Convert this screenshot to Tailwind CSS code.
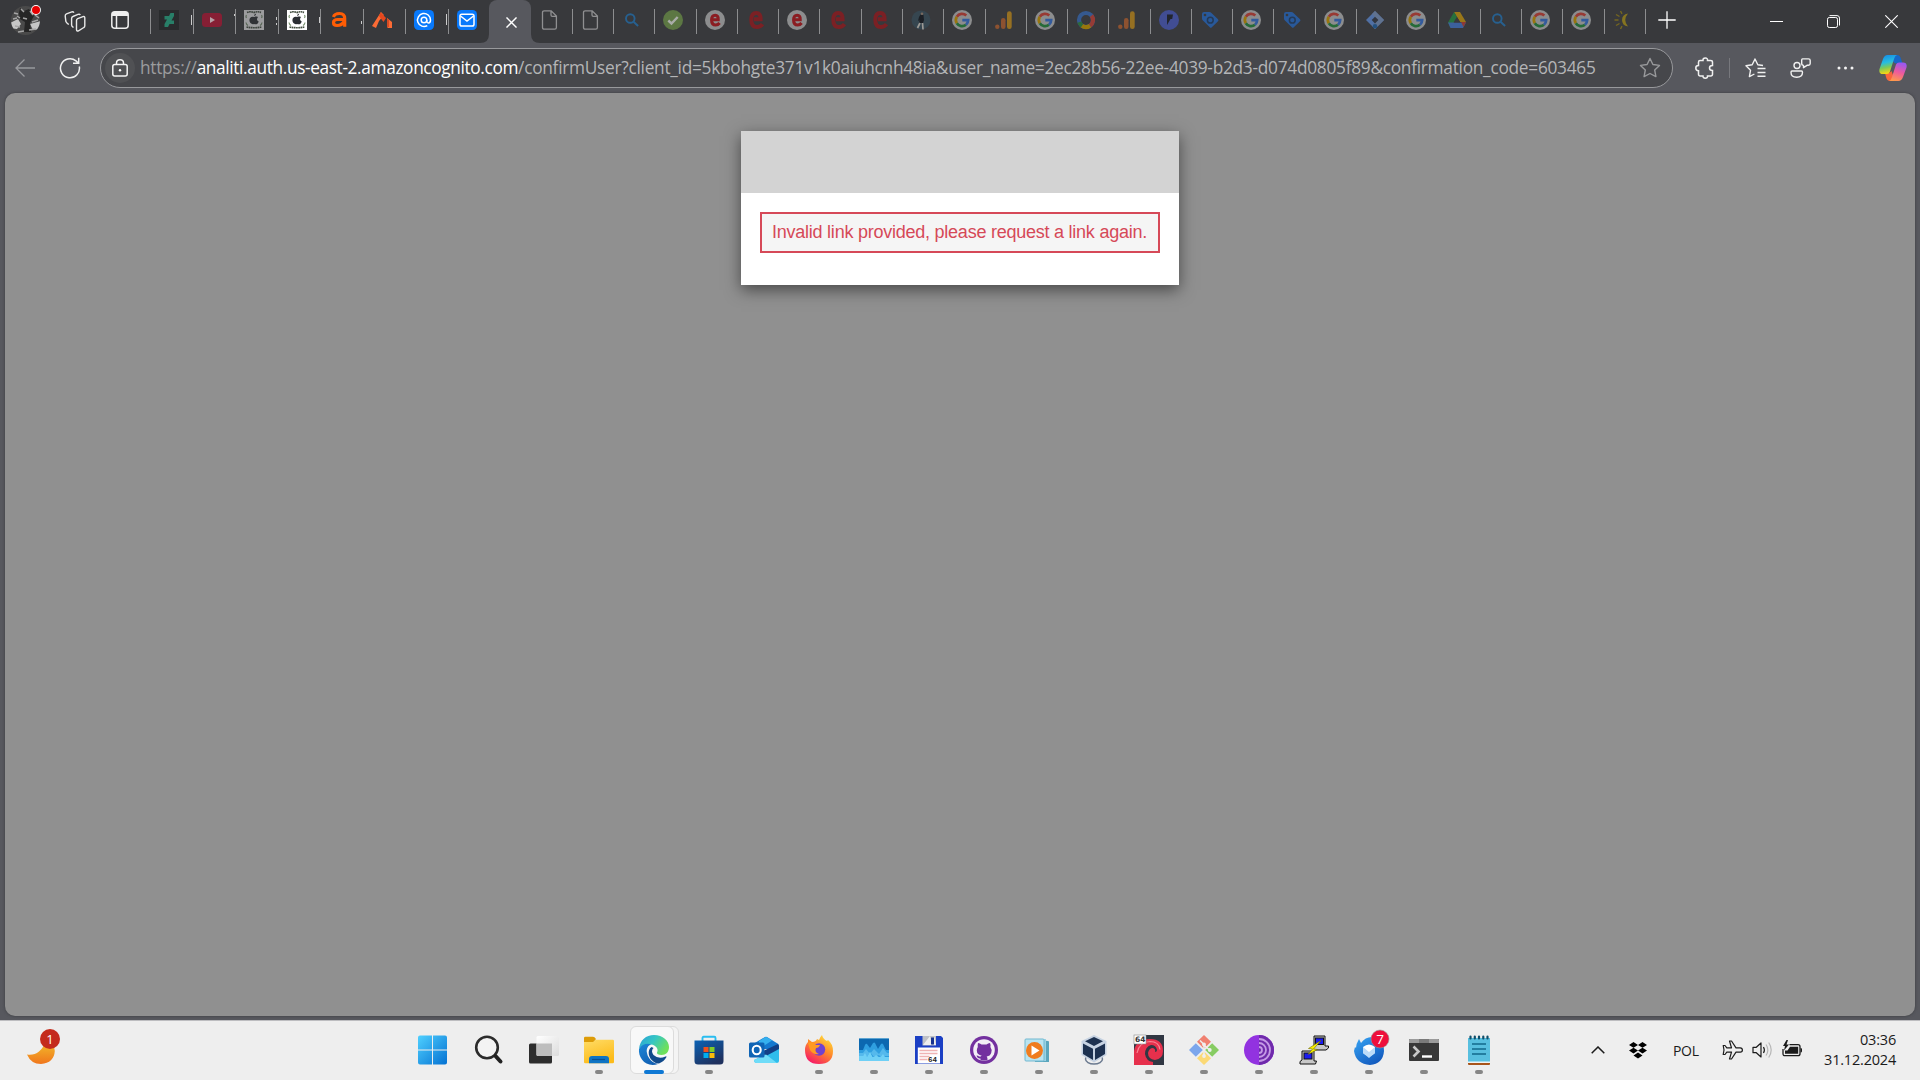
<!DOCTYPE html>
<html lang="en">
<head>
<meta charset="utf-8">
<title>Confirm user</title>
<script src="https://cdn.jsdelivr.net/npm/@tailwindcss/browser@4"></script>
</head>
<body class="w-[1920px] h-[1080px] overflow-hidden flex flex-col bg-[#57585e] font-['Open_Sans',sans-serif]">

<!-- shared defs -->
<svg class="hidden">
  <defs>
    <symbol id="doc" viewBox="0 0 20 20"><path d="M4 .8h7l5.200 5.200v11.500q0 1.700-1.700 1.700H4q-1.700 0-1.700-1.700V2.500Q2.300.8 4 .8ZM10.800.8V5q0 1.300 1.300 1.300h4.200" transform="translate(.2)" fill="none" stroke="#8f8f91" stroke-width="1.300"/></symbol>
    <symbol id="find" viewBox="0 0 20 20"><circle cx="8.300" cy="8.500" r="4.300" fill="none" stroke="#27608f" stroke-width="1.900"/><path d="M11.500 11.700l4.600 4.300" stroke="#27608f" stroke-width="2"/></symbol>
    <symbol id="check" viewBox="0 0 20 20"><circle cx="10" cy="10" r="10" fill="#5c7743"/><path d="M5.300 10.500l3.200 3 6.200-6.500" fill="none" stroke="#a9aca8" stroke-width="2.400"/></symbol>
    <symbol id="eplain" viewBox="0 0 20 20"><path d="M16.500 14.200Q14.500 17 11 17 5.300 17 5.300 9.800 5.300 3 10.300 3q4.500 0 4.300 6.300H8" fill="none" stroke="#7b2024" stroke-width="4"/></symbol>
    <symbol id="ering" viewBox="0 0 20 20"><circle cx="10" cy="10" r="10" fill="#8c8d8e"/><path d="M14.600 13Q13 15 10.700 15 6.600 15 6.600 10 6.600 5.200 10.200 5.200q3.200 0 3 4.500H8" fill="none" stroke="#8b1d22" stroke-width="3.100"/></symbol>
    <symbol id="person" viewBox="0 0 20 20"><circle cx="10" cy="10" r="9.500" fill="#364650"/><path d="M9.500 4.500l3 .5.500 5-1 3h-4l.5-3-1.500 1 1-4Z" fill="#1c2026"/><circle cx="11" cy="3.800" r="1.300" fill="#77695f"/><path d="M9 13l-2.500 5M11.500 13l.5 6.500" stroke="#9b9995" stroke-width="1.700" fill="none"/></symbol>
    <symbol id="g" viewBox="0 0 20 20"><circle cx="10" cy="10" r="10" fill="#8c8d8e"/><g fill="none" stroke-width="2.700"><path d="M4.800 6.700A6.200 6.200 0 0 1 14.300 5.500" stroke="#983a34"/><path d="M4.800 6.700a6.200 6.200 0 0 0 0 6.600" stroke="#98750e"/><path d="M4.800 13.300a6.200 6.200 0 0 0 9.200 1.500" stroke="#266b38"/><path d="M14 14.800a6.200 6.200 0 0 0 2.200-4.700H10.300" stroke="#335b9d"/></g></symbol>
    <symbol id="ga" viewBox="0 0 20 20"><circle cx="3.300" cy="16.700" r="2.200" fill="#8d5230"/><rect x="7" y="8" width="4.500" height="11" rx="2.200" fill="#8d5230"/><rect x="13" y="1.200" width="4.700" height="17.800" rx="2.300" fill="#967022"/></symbol>
    <symbol id="donut" viewBox="0 0 20 20"><g fill="none" stroke-width="4.200"><circle cx="10" cy="10" r="7" stroke="#35598f"/><path d="M15.500 5.600A7 7 0 0 1 14 15.700" stroke="#963b35"/><path d="M14 15.700a7 7 0 0 1-8.500-.3" stroke="#98770c"/><path d="M6 15.700a7 7 0 0 1-2.600-3.500" stroke="#2c6b3a"/></g></symbol>
    <symbol id="purple" viewBox="0 0 20 20"><circle cx="10" cy="10" r="10" fill="#414d93"/><path d="M8 4.500h6l-.8 4.500h-1.700L8 15Z" fill="#22252d"/></symbol>
    <symbol id="tag" viewBox="0 0 20 20"><path d="M2 4Q2 2 4 2h5.500q1 0 1.700.7L18 9.300q1 1 0 2L11.800 17.300q-1 1-2 0L2.700 10.300Q2 9.600 2 8.600Z" fill="#29599a"/><circle cx="5" cy="5" r="1.300" fill="#38393c"/><circle cx="10.300" cy="10.200" r="2.900" fill="none" stroke="#243a57" stroke-width="1.500"/></symbol>
    <symbol id="gtm" viewBox="0 0 20 20"><path d="M10 1l9 9-9 9-9-9Z" fill="#5070a4"/><path d="M10 1l9 9-9 9-3-3 6-6-6-6Z" fill="#60728f"/><path d="M10 6.700l3.400 3.300-3.400 3.400L6.700 10Z" fill="#32363f"/><circle cx="10" cy="16.300" r="2.300" fill="#24517f"/></symbol>
    <symbol id="drive" viewBox="0 0 20 20"><path d="M7 2h6l6 10h-6Z" fill="#997719"/><path d="M7 2l3 5-6.500 11L1 12.500Z" fill="#27703d"/><path d="M4 12.500h15L16 18H3.500L1 12.500Z" fill="#3c609c"/><path d="M10 7l3.500 5.500H6.700Z" fill="#38393c"/><path d="M14 12h5l-2.500 5Z" fill="#8f3935"/></symbol>
    <symbol id="sun" viewBox="0 0 20 20"><path d="M15 3.500q-5.500 6.500 0 13Q9 15.500 9 10t6-6.500Z" fill="#857420"/><path d="M5.500 10H1.500M6.500 6.500L3 4.500M6.500 13.500L3 15.500M9 3.800L7.500 1M9 16.200L7.500 19" fill="none" stroke="#76671f" stroke-width="1.400"/></symbol>
    <symbol id="da" viewBox="0 0 20 20"><rect width="20" height="20" fill="#292b2d"/><path d="M11.500 3H15v3l-2.500 4.500H15V14h-4.500L9 17H5.500v-3L8 9.500H5.500V6H10Z" fill="#287f68"/></symbol>
    <symbol id="yt" viewBox="0 0 20 20"><rect y="3" width="20" height="14" rx="3.500" fill="#861f34"/><path d="M8 7v6l5-3Z" fill="#b4a0a5"/></symbol>
    <symbol id="apple" viewBox="0 0 20 20"><rect width="20" height="20" fill="#fff"/><path d="M3 2.500q3.500-1.500 7 0 3.500-1.500 7 0M2.500 17q7.500 1.500 15 0" stroke="#3f4a3c" stroke-width="1.700" stroke-dasharray="1.700 .5" fill="none"/><path d="M2.500 5q-1 1.500 0 3M17.500 5q1 1.500 0 3M2 12.500q.3 2 2 3M18 12.500q-.3 2-2 3" stroke="#7d9674" stroke-width="1.200" fill="none"/><path d="M10 7c2.500-1.200 4 0 4 0-1.400 1.700-1.400 3.500.7 4.500-.8 2.700-2.700 3.400-4.700 2.400-2 1-4.600-.7-4.600-3.600C5.400 7.500 7.700 6 10 7ZM10 6q0-2 2.200-2.500Q12.200 5.500 10 6Z" fill="#2a2d32"/></symbol>
    <symbol id="appledim" viewBox="0 0 20 20"><use href="#apple" opacity=".5"/></symbol>
    <symbol id="a" viewBox="0 0 20 20"><path d="M4.500 7q1-3.500 6-3.500 5.200 0 5.200 5v8.300" fill="none" stroke="#ff5d05" stroke-width="3.200"/><path d="M15 9.500H9q-4.500 0-4.500 3t3.500 3q5 0 7-4" fill="none" stroke="#ff5d05" stroke-width="3.200"/></symbol>
    <symbol id="orange" viewBox="0 0 20 20"><path d="M0 16L9 2l3 3-5 6-3 7Z" fill="#fc6b35"/><path d="M8.500 2.200L14 8l-2.500 4L7 6Z" fill="#e5481e"/><path d="M15 8l5 4v6h-4.500Z" fill="#fc6b35"/><path d="M15 8l2 2v7h-2Z" fill="#d84a22"/></symbol>
    <symbol id="at" viewBox="0 0 20 20"><rect width="20" height="20" rx="4.500" fill="#0879fb"/><g fill="none" stroke="#fff" stroke-width="1.500"><circle cx="10" cy="10" r="2.800"/><path d="M12.800 10v1.500q.2 1.600 1.700 1.500 2-.2 2-3A6.500 6.500 0 1 0 13.300 15.600"/></g></symbol>
    <symbol id="mail" viewBox="0 0 20 20"><rect width="20" height="20" rx="4.500" fill="#0879fb"/><rect x="3" y="4.200" width="14" height="11.800" rx="1.800" fill="none" stroke="#fff" stroke-width="1.500"/><path d="M3.500 6l6.500 5 6.500-5" fill="none" stroke="#fff" stroke-width="1.500"/></symbol>
  </defs>
</svg>

<!-- tab strip -->
<header class="h-[43px] shrink-0 bg-[#38393c] flex text-white">
  <div class="w-[150px] shrink-0 flex items-center">
    <svg class="w-8 h-8 ml-[10px] -mt-[5px] shrink-0" viewBox="0 0 32 32">
      <clipPath id="av"><circle cx="15.500" cy="17.500" r="14.500"/></clipPath>
      <g clip-path="url(#av)"><rect width="32" height="32" y="2" fill="#4a4a4a"/><path d="M0 20l8-4 3 5-4 5-7-1ZM20 21l11-3v8l-8 1Z" fill="#c6c6c6"/><path d="M10 5l4 3 5-2 5 7-4 7 1 9h-7l1-10-5-3-1-6Z" fill="#252525"/><path d="M4 10l4 1M11 6l3 3M7 13l3 2M20 8l3 4M25 12l4 3M13 15l4 1M22 19l6-2M5 23l5 1M19 27l7-1M3 16l4-1M8 29l6-1" stroke="#a5a5a5" stroke-width="1.500"/></g>
      <circle cx="26" cy="7" r="4.900" fill="#fff"/><circle cx="26" cy="7" r="4" fill="#e60000"/>
    </svg>
    <svg class="w-[22px] h-[22px] ml-[22px] shrink-0" viewBox="0 0 22 22" fill="none" stroke="#e8e8e8" stroke-width="1.400"><path d="M12.500 9.500q0-1.300 1.200-1.800L19 5.600q1.700-.5 1.800 1.200v8q0 1.200-1 1.700l-5.300 3.300q-2 .8-2-1.200Z"/><path d="M9.500 16.500l-.5-.4q-1.400-.7-1.400-2V7.500q0-1.500 1.300-2L14 3.400q1.600-.6 2.300.6"/><path d="M4.800 13.500l-.5-.3Q2.500 12 1.900 10.500L1.200 5q0-1.700 1.300-2.200L7.800.9q1.300-.4 2.200.8"/></svg>
    <svg class="w-[18px] h-[18px] ml-[25px] -mt-[3px] shrink-0" viewBox="0 0 18 18" fill="none" stroke="#eee" stroke-width="1.500"><rect x=".8" y=".8" width="16.400" height="16.400" rx="3"/><path d="M1 3h16" stroke-width="4"/><path d="M5.500 4v13"/></svg>
  </div>
  <div id="pinned" class="flex shrink-0 w-[340px]"></div>
  <div class="-ml-[1.500px] w-[42.100px] shrink-0 relative bg-[#57585e] rounded-t-lg flex items-center justify-center">
    <svg class="w-[11px] h-[11px] mt-0 -mb-px ml-[3px]" viewBox="0 0 10 10"><path d="M.4.400l9.200 9.200M9.600.4L.4 9.600" stroke="#fff" stroke-width="1.300"/></svg>
    <svg class="absolute -left-[9px] bottom-0 w-[9px] h-[9px]" viewBox="0 0 9 9"><path d="M9 0v9H0q9 0 9-9Z" fill="#57585e"/></svg>
    <svg class="absolute -right-[9px] bottom-0 w-[9px] h-[9px]" viewBox="0 0 9 9"><path d="M0 0v9h9Q0 9 0 0Z" fill="#57585e"/></svg>
  </div>
  <div id="tabs" class="flex shrink-0 w-[1114px]"></div>
  <div class="flex-1 flex items-center border-l border-transparent">
    <svg class="w-[18px] h-[18px] ml-[12px] -mt-[4px]" viewBox="0 0 18 18"><path d="M9 .3v17.400M.3 9h17.400" stroke="#fff" stroke-width="1.300"/></svg>
    <svg class="w-[13px] h-[13px] ml-[94px] " viewBox="0 0 13 13"><path d="M0 6.500h13" stroke="#fff" stroke-width="1"/></svg>
    <svg class="w-[13px] h-[13px] ml-[44px] " viewBox="0 0 13 13" fill="none" stroke="#fff"><rect x=".5" y="2.500" width="10" height="10" rx="1.800"/><path d="M2.500 .6H10q2.500 0 2.500 2.500V10.500"/></svg>
    <svg class="w-[13px] h-[13px] ml-[45px] " viewBox="0 0 13 13"><path d="M.3.300l12.400 12.400M12.700.3L.3 12.700" stroke="#fff" stroke-width="1.100"/></svg>
  </div>
</header>

<!-- toolbar -->
<nav class="h-[50px] shrink-0 flex items-center pb-0">
  <svg class="w-5 h-[18px] ml-[15px]" viewBox="0 0 20 18" fill="none" stroke="#98999d" stroke-width="1.300"><path d="M20 9H1M9.500.5L1 9l8.500 8.500"/></svg>
  <svg class="w-[22px] h-[22px] ml-[24px]" viewBox="0 0 22 22" fill="none" stroke="#f0f0f0" stroke-width="1.500"><path d="M20.300 9.500A9.500 9.500 0 1 1 17 3.900L19.300 6M19.700.8V6.300H14"/></svg>
  <div class="ml-[19px] mt-0 w-[1573px] h-10 rounded-full border border-[#98999c] bg-[#46474b] flex items-center">
    <div class="w-[30px] h-[30px] ml-[4px] rounded-full bg-[#505154] flex items-center justify-center shrink-0">
      <svg class="w-4 h-[18px] -mt-px" viewBox="0 0 16 18" fill="none" stroke="#f4f4f4" stroke-width="1.500"><rect x=".8" y="5.500" width="14.400" height="11.500" rx="2"/><path d="M4.500 5.500V4q0-3.200 3.500-3.200T11.500 4v1.500"/><circle cx="8" cy="11.200" r="1.200" fill="#fff" stroke="none"/></svg>
    </div>
    <div class="ml-[5px] w-[1459px] whitespace-nowrap text-[17.300px] leading-[24px] text-[#b4b5b7] -mt-px"><span class="text-[#9b9c9e] tracking-[-0.290px]">https://</span><span class="text-white tracking-[-0.370px]">analiti.auth.us-east-2.amazoncognito.com</span><span class="tracking-[-0.270px]">/confirmUser?client_id=5kbohgte371v1k0aiuhcnh48ia&amp;user_name=2ec28b56-22ee-4039-b2d3-d074d0805f89&amp;confirmation_code=603465</span></div>
    <svg class="w-[22px] h-[22px] ml-[40px] shrink-0" viewBox="0 0 22 22" fill="none" stroke="#98999b" stroke-width="1.400"><path d="M11 1.500l2.900 6 6.600.9-4.800 4.600 1.200 6.600L11 16.500l-5.900 3.100 1.200-6.600L1.500 8.400l6.600-.9Z" stroke-linejoin="round"/></svg>
  </div>
  <svg class="w-5 h-[22px] ml-[22px]" viewBox="0 0 20 22" fill="none" stroke="#f0f0f0" stroke-width="1.500"><path d="M5 3.500H8q-.2-2.500 2.300-2.500t2.200 2.500h3.200q1.800 0 1.800 1.700V8.500q-3 0-3 2.500t3 2.500v3.800q0 1.700-1.800 1.700h-3.200q.2 2.200-2.200 2.200T8 19H5.200q-1.700 0-1.700-1.700v-3.600Q.8 13.500.8 11t2.700-2.500V5.200Q3.500 3.500 5 3.500Z"/></svg>
  <div class="w-px h-5 bg-[#77787d] ml-[14px]"></div>
  <svg class="w-[21px] h-5 ml-[15px]" viewBox="0 0 21 20" fill="none" stroke="#f0f0f0" stroke-width="1.400" stroke-linejoin="round"><path d="M18 7.500l-5.200-.7L10 1 7.200 6.800 1 7.800l4.500 4.500L4.400 18.600l5-2.600M12.500 10.500H20.500M12.500 14.500H20.500M12.500 18.300H20.500"/></svg>
  <svg class="w-[21px] h-5 ml-[24px]" viewBox="0 0 21 20" fill="none" stroke="#f0f0f0" stroke-width="1.400"><circle cx="7" cy="7.500" r="3"/><path d="M2 13h9.500q1 0 1 1.200 0 5-5.800 5T1 14.200Q1 13 2 13ZM12.500.9h6q1.700 0 1.700 1.700v3q0 1.700-1.700 1.700H17L13.500 9.700V7.400q-1.800 0-1.800-1.800v-3q0-1.700.8-1.700Z" stroke-linejoin="round"/></svg>
  <svg class="w-[17px] h-1 ml-[26px]" viewBox="0 0 17 4" fill="#f4f4f4"><circle cx="2" cy="2" r="1.500"/><circle cx="8.500" cy="2" r="1.500"/><circle cx="15" cy="2" r="1.500"/></svg>
  <svg class="w-7 h-[26px] ml-[25px]" viewBox="0 0 28 26">
    <defs><linearGradient id="c1" x2=".2" y2="1"><stop stop-color="#1488e8"/><stop offset=".45" stop-color="#27bde0"/><stop offset=".7" stop-color="#7bc95a"/><stop offset="1" stop-color="#f2d415"/></linearGradient><linearGradient id="c2" x1=".6" x2=".3" y2="1"><stop stop-color="#9a58f0"/><stop offset=".5" stop-color="#ee5a9d"/><stop offset="1" stop-color="#ff9a4a"/></linearGradient></defs>
    <path d="M15.500 0H18q3 0 4 4l1.500 4.500h-6q-2.500 0-4-3Z" fill="#1767c8"/><path d="M6 18h3q2 0 3.500-2l2.500 7q-1 3-4 3-3 0-4-4Z" fill="#f9653c"/>
    <path d="M8.500 0H18q-2 .5-3 4l-4 12.500Q10 19 8 19H4q-4.500 0-3.500-5L4 4Q5.500 0 8.500 0Z" fill="url(#c1)"/><path d="M19.500 26H10q2-.5 3-4l4-12.500Q18 7.500 20 7.500h4q4.500 0 3.500 5L24 22q-1.500 4-4.500 4Z" fill="url(#c2)"/>
  </svg>
</nav>

<!-- page -->
<main class="ml-[5px] w-[1910px] h-[923px] shrink-0 bg-[#909090] rounded-[10px] pt-[38px] flex justify-center items-start shadow-[0_0_3px_#3a3b3f]">
  <section class="w-[438px] h-[154px] bg-white shadow-[0_5px_15px_rgba(0,0,0,0.5)]">
    <div class="h-[62px] bg-[#d3d3d3]"></div>
    <div class="pt-[19px] px-[19px]">
      <p class="h-[41px] border-2 border-[#d64958] bg-[#f5f5f5] px-[10px] text-[#d64958] text-[18px] tracking-[-0.240px] leading-[36px] whitespace-nowrap font-['Liberation_Sans',sans-serif]">Invalid link provided, please request a link again.</p>
    </div>
  </section>
</main>

<!-- taskbar -->
<footer class="mt-[4px] h-[60px] shrink-0 bg-[#eee] border-t border-[#bdbdc0] flex text-[#1b1b1b]">
  <div class="w-[406.500px] shrink-0 pl-[27px] pt-2">
    <div class="relative w-[34px] h-[36px]">
      <svg class="w-[34px] h-[36px]" viewBox="0 0 34 36"><defs><linearGradient id="moon" x2="0" y2="1"><stop stop-color="#f2c02c"/><stop offset="1" stop-color="#f0761c"/></linearGradient></defs><path d="M0 25.500q7 1 12-3T18 12q10 2 9.800 10Q27 34 14 35 4 35 0 25.500Z" fill="url(#moon)"/></svg>
      <span class="absolute left-[13px] top-0 w-5 h-5 rounded-full bg-[#c42b1c] text-white text-[13px] leading-5 text-center">1</span>
    </div>
  </div>
  <div id="apps" class="flex h-full"></div>
  <div class="flex-1 flex items-center pr-6 pt-0">
    <div class="flex-1"></div>
    <svg class="w-[14px] h-2 mt-[-1px]" viewBox="0 0 14 8"><path d="M.7 7.300L7 1l6.300 6.300" fill="none" stroke="#1b1b1b" stroke-width="1.500"/></svg>
    <svg class="w-[18px] h-[17px] ml-[24px] mt-[-1px]" viewBox="0 0 18 17"><path d="M4.500 0L9 2.900 4.500 5.700 0 2.900ZM13.500 0L18 2.900l-4.500 2.800L9 2.900ZM4.500 5.700L9 8.600l-4.500 2.900L0 8.600ZM13.500 5.700L18 8.600l-4.500 2.900L9 8.600ZM9 10.500l4.500 2.900L9 16.500l-4.500-3.100Z"/></svg>
    <span class="text-[14px] leading-5 ml-[26px] w-[27px] tracking-[-0.300px]">POL</span>
    <svg class="w-[21px] h-5 ml-[22px] mt-[-2px]" viewBox="0 0 21 20" fill="none" stroke="#1b1b1b" stroke-width="1.200" stroke-linejoin="round"><path d="M7.500 1h2l4.500 6.800h4.200q2.200.2 2.200 2.200t-2.200 2.200H14L9.500 19h-2l2-6.800H4.800L3 14.500H1.200L2 10 1.200 5.500H3l1.800 2.300h4.700Z"/></svg>
    <svg class="w-[21px] h-[18px] ml-[9px] mt-[-2px]" viewBox="0 0 21 18" fill="none" stroke="#1b1b1b" stroke-width="1.200" stroke-linejoin="round"><path d="M1 6.300h3.300L9 2v14l-4.700-4.300H1Z"/><path d="M11.500 6q1.800 3 0 6"/><path d="M14 3.500q3.700 5.500 0 11M16.700 1.500q5 7.500 0 15" stroke="#b7b7b7"/></svg>
    <svg class="w-[21px] h-[18px] ml-[9px] mt-[-4px]" viewBox="0 0 21 18"><path d="M7.500 4.700H16q2 0 2 2v7q0 2-2 2H3q-2 0-2-2V9" fill="none" stroke="#1b1b1b" stroke-width="1.300"/><path d="M8 6.700h8.200v7H3V10.500h2.500ZM18.500 8q1.500 0 1.500 1.200v2q0 1.200-1.500 1.200ZM4.500 0L1 6h2L2 10.500l5-6H4.500L6 0Z" fill="#1b1b1b"/></svg>
    <div class="w-[93px] text-right text-[14.500px] leading-5 tracking-[-0.200px] mt-[-2px]"><div>03:36</div><div>31.12.2024</div></div>
  </div>
</footer>

<script>
// each tab: separator, favicon, and the sliver of title that still fits (x/y/height of its visible strokes)
const tabHtml = (id, width, first, slivers) =>
  `<div class="relative h-full flex items-center shrink-0" style="width:${width}px">${first ? '' : '<span class="absolute left-0 top-[9px] w-px h-[25px] bg-[#8c8d8f]"></span>'}<svg class="w-5 h-5 ml-[9px] -mt-[3px]"><use href="#${id}"/></svg>${(slivers || []).map(([y, h]) => `<span class="absolute left-[41px] w-px bg-[#ccc]" style="top:${y}px;height:${h}px"></span>`).join('')}</div>`;
const pinned = [['da',[[15,10]]],['yt',[[14,2]]],['appledim',[[17,3],[23,2]]],['apple',[[17,6]]],['a',[[21,3]]],['orange'],['at',[[14,11]]],['mail']];
document.getElementById('pinned').innerHTML = pinned.map(([i, s]) => tabHtml(i, 42.5, false, s)).join('');
const tabs = ['doc','doc','find','check','ering','eplain','ering','eplain','eplain','person','g','ga','g','donut','ga','purple','tag','g','tag','g','gtm','g','drive','find','g','g','sun'];
document.getElementById('tabs').innerHTML = tabs.map((i, n) => tabHtml(i, 41.27, n === 0)).join('') + '<span class="w-px shrink-0 h-[25px] mt-[9px] bg-[#8c8d8f]"></span>';

const apps = [
 // start
 `<defs><linearGradient id="w" x2="1" y2="1"><stop stop-color="#4fd0ff"/><stop offset="1" stop-color="#0471d2"/></linearGradient></defs><path transform="translate(-1.500)" d="M2.500.5H14.500V14.500H.5V2.500q0-2 2-2ZM15.500 .5h12q2 0 2 2v12H15.500ZM.5 15.500H14.500v14H2.500q-2 0-2-2ZM15.500 15.500h14v12q0 2-2 2h-12Z" fill="url(#w)"/>`,
 // search
 `<circle cx="13" cy="12.500" r="10.800" fill="#f8f8f8" fill-opacity=".5" stroke="#2b2b2b" stroke-width="2.600"/><path d="M21.500 21l5 5.500" stroke="#222" stroke-width="4" stroke-linecap="round"/>`,
 // task view
 `<defs><linearGradient id="tv" x2="1" y2="1"><stop stop-color="#fff"/><stop offset="1" stop-color="#dcdcdc"/></linearGradient></defs><rect x="0" y="8.500" width="23" height="20" rx="1.500" fill="#2d2d2d"/><rect x="7.500" y="1" width="22.500" height="20" rx="1.500" fill="url(#tv)"/><path d="M7.500 8.500H23V21H9q-1.500 0-1.500-1.500Z" fill="#bdbdbd"/>`,
 // files
 `<defs><linearGradient id="fx" x2=".4" y2="1"><stop stop-color="#ffdc66"/><stop offset="1" stop-color="#fcbb1a"/></linearGradient></defs><path d="M0 3q0-1.300 1.300-1.300H9q1.500 0 3 2.300l-3 4H0Z" fill="#dd9c08"/><path d="M0 7h9l2.800-2.300h17Q30 4.700 30 6v21q0 1.300-1.300 1.300H1.300Q0 28.300 0 27Z" fill="url(#fx)"/><path d="M5 28.300V24q0-3 3-3h14q3 0 3 3v4.300Z" fill="#0f74c4"/><path d="M8 24.500h13" stroke="#0a4f93" stroke-width="1.200"/>`,
 // edge
 `<defs><linearGradient id="ed1" x2="1" y2=".5"><stop stop-color="#2a9ed8"/><stop offset=".5" stop-color="#35c6c4"/><stop offset="1" stop-color="#6fe05a"/></linearGradient><linearGradient id="ed2" x2=".6" y2="1"><stop stop-color="#1c87d8"/><stop offset="1" stop-color="#1160b3"/></linearGradient></defs><path d="M0 14C1 5 7 0 15 0c9 0 15 6 15 12 0 5-3 8-7.500 8-3 0-5-1-4.500-2.500 2-3-1-7.500-6-8C7 9 2 11 0 14Z" fill="url(#ed1)"/><path d="M0 14C3 9 8 8 12.500 9.500 9 10 7 14 8 18c1 6 6 10 11 11-12 4-20-6-19-15Z" fill="url(#ed2)"/><path d="M12.500 12C8 15 9 23 15 27q2 1.500 5 1.500 5-2 7.500-6.500 0-1-1-.5-7 3-12-1.500-3-4 0-7Z" fill="#114a8b"/>`,
 // store
 `<defs><linearGradient id="st" x2=".6" y2="1"><stop stop-color="#0b62b5"/><stop offset="1" stop-color="#1f315e"/></linearGradient></defs><path d="M8.500 6V3q0-1.200 1.200-1.200h10.600q1.200 0 1.200 1.200v3" fill="none" stroke="#29bdf0" stroke-width="1.900"/><path d="M.5 5.500h29V26q0 3.500-3.500 3.500H4Q.5 29.500.5 26Z" fill="url(#st)"/><path d="M9.500 12h5v5h-5Z" fill="#f1511b"/><path d="M15.500 12h5v5h-5Z" fill="#80cc28"/><path d="M9.500 18h5v5h-5Z" fill="#00adef"/><path d="M15.500 18h5v5h-5Z" fill="#fbbc09"/>`,
 // outlook
 `<path d="M5 8.500L16 2q1-.5 2 0l10.500 6.500Q30 9.500 30 11v3H5Z" fill="#1478cf"/><path d="M10 6L16 2.300q1-.6 2 0L23 5.500 10 14Z" fill="#35b0ee"/><path d="M30 13v12.500q0 2.500-2.500 2.500H8q-3 0-3-3Z" fill="#2fbdec"/><path d="M29 9q1 1 1 2.500V14L17 21l-5-4Z" fill="#123f86"/><path d="M5 25l12-5.500L28 28H8q-3 0-3-3Z" fill="#6fdcf8"/><rect x="0" y="7.500" width="15.500" height="15" rx="1.500" fill="#0f64b5"/><ellipse cx="7.700" cy="15" rx="4" ry="4.300" fill="none" stroke="#fff" stroke-width="2.100"/>`,
 // firefox
 `<defs><linearGradient id="ff" x1=".8" x2=".2" y2="1"><stop stop-color="#ffe23c"/><stop offset=".45" stop-color="#ff8a2a"/><stop offset="1" stop-color="#f5116c"/></linearGradient></defs><path d="M18 0q1 4 5 6l1-1q5 4 5 11 0 13-14 13Q1 29 1 15q0-5 3-8V4l4 3q4 0 5-3l2 1q1-3 3-5Z" fill="url(#ff)"/><circle cx="15" cy="14.500" r="6.200" fill="#7042cf"/><path d="M4 8q5-2 8 2h4q-1 3-4 3-2 4 3 6-6 1-9-4Z" fill="#ff9a22"/>`,
 // system monitor
 `<rect y="3.500" width="30" height="22.500" rx=".8" fill="#6fd0f6"/><path d="M0 3.500h30V17H0Z" fill="#0c68b0"/><path d="M0 15h4l2-5q1-2 2-1l3 4 3-5q1.500-1 2 0l3 6 3-5q1-1 2 0l3 6h3v7H0Z" fill="#2f9fe0"/><path d="M0 18h4l3-4 4 5 4-5 5 5 4-6 4 5h2v3h-5l-2 3-3-4-5 2-4-5-3 5-3-2-3 3H0Z" fill="#55b9ec"/><path d="M0 21h4l2-3 2 4 3-5 3 6 3-3 4 3 3-4 2 3h4v4H0Z" fill="#6fd0f6"/>`,
 // floppy
 `<path d="M1 1h26l2 2v26H1Z" fill="#1b3fc4"/><path d="M8.500 1H22v9.500H8.500Z" fill="#bfc1c6"/><path d="M9 10L16 1l2 9ZM20.500 1l1.500 9h-3Z" fill="#eee"/><path d="M17 2.500h3v7h-3Z" fill="#173390"/><path d="M3.800 12.500H26v16H3.800Z" fill="#fff"/><path d="M5.500 15.500h18M5.500 18.500h18M5.500 21.500h10M5.500 24.500h8" stroke="#efb3b3" stroke-width="1.300"/><text x="14" y="26.500" font-size="7.500" font-family="Liberation Mono" font-weight="bold" fill="#222">64</text>`,
 // github
 `<circle cx="15" cy="15" r="14" fill="#73309f"/><circle cx="15" cy="15" r="10.800" fill="#f3eef6"/><path d="M9 8q2 0 3.500 1.500h5Q19 8 21 8q1 2 .4 4 2 2.500.8 6-1 3-4.500 3.500 1 1 .8 4h-7v-2q-3 .5-4-3 2 0 2.500 1h1.800q0-.5 1-.8Q8 20 7.800 15.500q0-2 1-3.500Q8.500 10 9 8Z" fill="#73309f"/>`,
 // media player
 `<path d="M8 4l16 2q1 0 1 1v20H11Z" fill="#5aa6bd"/><path d="M4 4h18v22H7Z" fill="#9bd3e4"/><rect x="1" y="4" width="19" height="22" rx="1" fill="#b9e4f1" stroke="#73b8d0"/><circle cx="10.500" cy="15.500" r="8.500" fill="#f07c1e"/><path d="M7.500 10.500v10l8-5Z" fill="#fff"/>`,
 // virtualbox
 `<ellipse cx="15" cy="24" rx="8.500" ry="5" fill="none" stroke="#6b7a90" stroke-width="1.500"/><path d="M2.500 6L15 0l12.500 6v14L15 27.500 2.500 20Z" fill="#c6d2e2"/><path d="M6 6.200L15 2l9 4.200L15 11ZM4 8.500L14 13.800V25L4 19ZM26 8.500L16 13.800V25l10-6Z" fill="#1d3150"/>`,
 // red swirl
 `<rect width="30" height="30" fill="#313743"/><path d="M0 30V16Q2 4 16 4q13 0 13 12 0 8-8 9-7-1-7-7 1-5 5-5 3 1 2 4 2 0 2-2-1-5-6-5-6 2-6 9 1 7 8 8v3Z" fill="#e6304c"/><path d="M3 18Q5 7 16 6.500q9 0 10 8" fill="none" stroke="#f78794" stroke-width="1.200"/><rect width="12" height="9" fill="#fff" stroke="#888" stroke-width=".6"/><text x="1" y="7.300" font-size="7.500" font-family="DejaVu Sans" font-weight="bold" fill="#333">64</text>`,
 // git
 `<path d="M15 0l7 6.800-7 7-7-7Z" fill="#f08070"/><path d="M6.800 8.200l7 6.800-7 6.800L0 15Z" fill="#7ca6ec"/><path d="M23.200 8.200L30 15l-6.800 6.800-7-6.800Z" fill="#87cc62"/><path d="M15 16.200l7 7L15 30l-7-6.800Z" fill="#fbd975"/><path d="M11 5.500L15 9.500V21M15 10l5.500 5" fill="none" stroke="#eee" stroke-width="1.500"/><circle cx="15" cy="9.500" r="1.900" fill="#eee"/><circle cx="15" cy="21" r="1.900" fill="#eee"/><circle cx="20.800" cy="15" r="1.900" fill="#eee"/>`,
 // tor
 `<circle cx="15" cy="15" r="15" fill="#9232e0"/><path d="M15 0a15 15 0 0 1 0 30Z" fill="#6f2aab"/><g fill="none" stroke="#c59ae6" stroke-width="1.800"><path d="M15 4a11 11 0 0 1 0 22M15 8a7 7 0 0 1 0 14M15 12a3 3 0 0 1 0 6"/></g>`,
 // putty
 `<g stroke="#111" stroke-width="1"><path d="M15 1h11v10h3.500v2L27 15H14.500l-1-2 1.500-2Z" fill="#c8c8c8"/><rect x="16.500" y="3" width="8" height="6.500" fill="#1b1bf0"/><path d="M3 16h12v10h2.500l-1 3H1v-2.500L3 25Z" fill="#c8c8c8"/><rect x="5" y="18" width="8" height="6" fill="#1b1bf0"/></g><path d="M22 5.500L9.500 13.500l4 .5L9 19.500l9.500-5-4-.5Z" fill="#f8f000" stroke="#6e6a00" stroke-width=".6"/>`,
 // thunderbird
 `<defs><linearGradient id="tb" x2=".7" y2="1"><stop stop-color="#38a6f5"/><stop offset="1" stop-color="#1259bd"/></linearGradient></defs><path d="M2 13q0-4 3-9l2 4Q11 2 18 2q12 2 12 14-1 13-14 14Q2 29 0 16l1-4Z" fill="url(#tb)"/><path d="M9 12q6-5 12 0v6q-6 6-12 0Z" fill="#fff"/><path d="M9 12l6 5 6-5v6l-6 5-6-5Z" fill="#bcdcf9"/><circle cx="26" cy="4" r="9" fill="#ee0f3c" stroke="#999" stroke-width=".6"/><text x="26" y="8.800" text-anchor="middle" font-size="13.500" font-family="Open Sans" fill="#fff">7</text>`,
 // terminal
 `<rect y="4" width="30" height="22" rx="1" fill="#383838"/><path d="M0 8V5q0-1 1-1h28q1 0 1 1v3Z" fill="#9b9b9b"/><path d="M10 4h10v4H10Z" fill="#7a7a7a"/><path d="M4.500 11.500l5 5-5 5" fill="none" stroke="#c8c8c8" stroke-width="2.600"/><path d="M13 21.500h10" stroke="#fff" stroke-width="2.400"/>`,
 // notepad
 `<path d="M4 28h22v1q0 1-1 1H5q-1 0-1-1Z" fill="#a8541a"/><path d="M4 3h22v24H4Z" fill="#58bfdf"/><path d="M8 9h14M8 14h14M8 19h14" stroke="#126a8c" stroke-width="1.700"/><g stroke="#0f4f6b" stroke-width="2.200" stroke-linecap="round"><path d="M6.500 1.500v2M10.800 1.500v2M15 1.500v2M19.300 1.500v2M23.500 1.500v2"/></g><path d="M4 27h22" stroke="#e9f6fa"/>`
];
document.getElementById('apps').innerHTML = apps.map((svg, n) => `
  <div class="relative w-[55px] h-full flex justify-center">
    ${n === 4 ? '<span class="absolute left-[7px] top-[5px] w-[45px] h-[48px] rounded-md border border-[#dcdcdc] bg-[#f4f4f4]"></span><span class="absolute left-[3px] top-[5px] w-[44px] h-[48px] rounded-md border border-[#dcdcdc] bg-[#f8f8f8]"></span>' : ''}
    <svg class="relative w-[30px] h-[30px] mt-[14px] overflow-visible" viewBox="0 0 30 30">${svg}</svg>
    ${n < 3 || n === 6 ? '' : n === 4 ? '<span class="absolute left-[17px] top-[49px] w-5 h-1 rounded-full bg-[#0e78d4]"></span>' : '<span class="absolute left-[23.500px] top-[49px] w-2 h-1 rounded-full bg-[#868686]"></span>'}
  </div>`).join('');
</script>
</body>
</html>
